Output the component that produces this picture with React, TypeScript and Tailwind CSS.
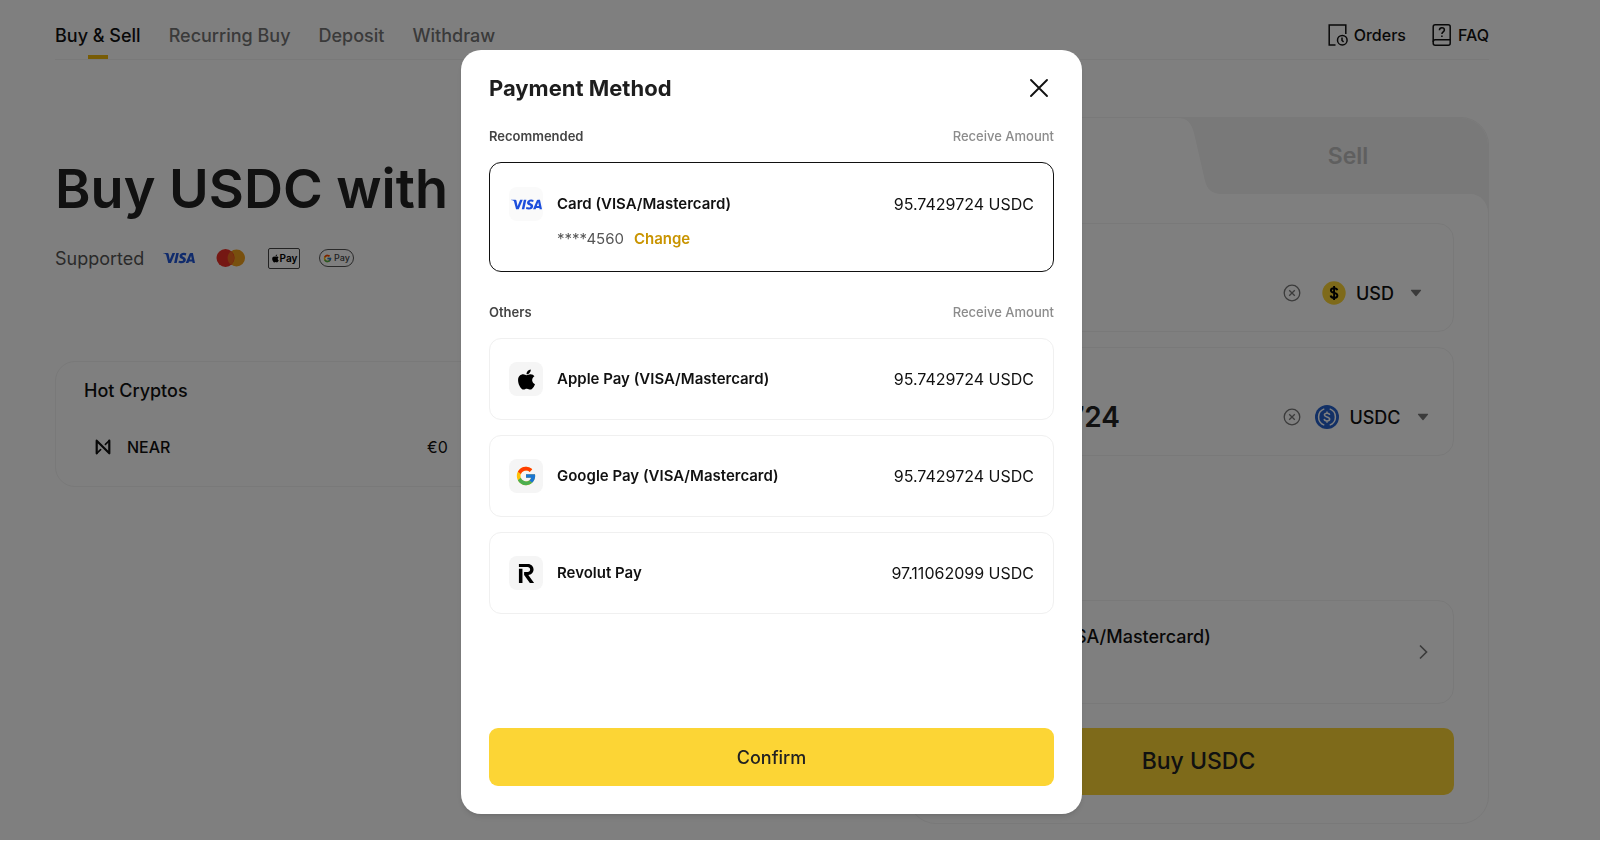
import { useState, type ReactNode } from "react";
import { FaApple } from "react-icons/fa";
import { FcGoogle } from "react-icons/fc";
import { SiRevolut, SiVisa } from "react-icons/si";

function OrdersIcon() {
  return (
    <svg width="20" height="24" viewBox="0 0 20 24" fill="none" stroke="currentColor" strokeWidth="1.5">
      <path d="M7.500 22H1.200V2h16.600v9" />
      <circle cx="14.300" cy="17.200" r="4.800" />
      <path d="M14 14.600v2.900l1.600 1.400" />
    </svg>
  );
}

function FaqIcon() {
  return (
    <svg width="20" height="24" viewBox="0 0 20 24" fill="none" stroke="currentColor" strokeWidth="1.5">
      <rect x="1.200" y="1.800" width="17" height="20.400" rx="2" />
      <path d="M1.200 19c0-1.600.8-2.200 2-2.200h15" />
      <path d="M7.400 7.300c.1-1.700 1.100-2.500 2.500-2.500 1.500 0 2.500.9 2.500 2.200 0 1.900-2.500 1.900-2.500 4" />
      <path d="M9.900 12.500v1.600" />
    </svg>
  );
}

function MastercardIcon() {
  return (
    <svg width="30" height="20" viewBox="0 0 30 20">
      <circle cx="20.500" cy="10" r="8.500" fill="#f0a01c" />
      <circle cx="9.500" cy="10" r="9" fill="#eb2f26" />
      <path d="M15 3.200a9 9 0 0 1 0 13.600a8.500 8.500 0 0 1 0-13.600z" fill="#ee6a1f" />
    </svg>
  );
}

function NearIcon() {
  return (
    <svg width="16" height="16" viewBox="0 0 16 16" fill="none" stroke="currentColor" strokeLinecap="round" strokeLinejoin="round">
      <path d="M1.700 14.300V1.700L14.300 14.300V1.700" strokeWidth="2.200" />
      <path d="M1.700 14.300L5.600 10.600M14.300 1.700L10.400 5.400" strokeWidth="1.600" />
    </svg>
  );
}

function UsdIcon() {
  return (
    <svg width="24" height="24" viewBox="0 0 24 24">
      <circle cx="12" cy="12" r="11.700" fill="#fcd535" />
      <path d="M15.300 9.300c-.3-1.300-1.500-2-3.200-2-1.900 0-3.200.8-3.200 2.200 0 3.200 6.500 1.500 6.500 4.900 0 1.500-1.300 2.400-3.300 2.400s-3.300-.8-3.500-2.300M12.100 5v14" fill="none" stroke="#000" strokeWidth="1.900" />
    </svg>
  );
}

function UsdcIcon() {
  return (
    <svg width="24" height="24" viewBox="0 0 24 24">
      <circle cx="12" cy="12" r="12" fill="#2460cc" />
      <g fill="none" stroke="#fff" strokeWidth="1.500">
        <path d="M9.300 3.900a8.600 8.600 0 0 0 0 16.200M14.700 3.900a8.600 8.600 0 0 1 0 16.200" />
        <path d="M14.600 10c-.2-1.200-1.200-1.800-2.600-1.800-1.600 0-2.600.7-2.600 1.800 0 2.500 5.300 1.300 5.300 4 0 1.200-1.100 1.900-2.700 1.900s-2.700-.7-2.800-2M12 6.400v1.800M12 15.900v1.800" />
      </g>
    </svg>
  );
}

function ClearIcon() {
  return (
    <svg width="18" height="18" viewBox="0 0 18 18" fill="none" stroke="currentColor" strokeWidth="1.300">
      <circle cx="9" cy="9" r="7.800" />
      <path d="M6.200 6.200l5.600 5.600M11.800 6.200l-5.600 5.600" />
    </svg>
  );
}

function CaretIcon() {
  return (
    <svg width="12" height="8" viewBox="0 0 12 8" fill="currentColor">
      <path d="M1.500.8h9a.5.5 0 0 1 .4.900L6.500 7a.7.7 0 0 1-1 0L1.100 1.700a.5.5 0 0 1 .4-.9z" />
    </svg>
  );
}

const tabs = ["Buy & Sell", "Recurring Buy", "Deposit", "Withdraw"];

function Header() {
  return (
    <header className="flex h-[60px] items-stretch justify-between border-b border-[#f2f2f2]">
      <nav className="flex gap-7 pt-3 text-[18px] font-medium text-[#757575]">
        {tabs.map((tab, i) => (
          <a
            key={tab}
            href="#"
            className={
              i === 0
                ? "flex flex-col items-center justify-between pt-2.5 leading-7 text-[#111]"
                : "flex flex-col items-center pt-2.5 leading-7"
            }
          >
            {tab}
            {i === 0 && <span className="h-1 w-5 bg-[#f0b90b]" />}
          </a>
        ))}
      </nav>
      <div className="flex items-center gap-[26px] pt-[11px] text-[16px] font-medium text-[#111]">
        <a href="#" className="flex items-center gap-1.5">
          <OrdersIcon />
          Orders
        </a>
        <a href="#" className="flex items-center gap-1.5">
          <FaqIcon />
          FAQ
        </a>
      </div>
    </header>
  );
}

function Intro() {
  return (
    <section className="flex-1 pt-[97px]">
      <h1 className="text-[54px] leading-[64px] font-semibold text-[#222]">Buy USDC with</h1>
      <div className="mt-[23px] flex h-7 items-center text-[18px] text-[#555]">
        <span className="w-[108px]">Supported</span>
        <SiVisa size={32} color="#2157d8" />
        <span className="ml-[21px]">
          <MastercardIcon />
        </span>
        <span className="ml-[22px] flex h-[21px] w-8 items-center justify-center rounded-xs border border-[#444] text-[10px] font-semibold text-black">
          <FaApple size={9} />
          Pay
        </span>
        <span className="ml-[19px] flex h-[18px] w-[35px] items-center justify-center gap-0.5 rounded-full border border-[#555] text-[9px] font-medium text-[#444]">
          <FcGoogle size={9} />
          Pay
        </span>
      </div>
      <div className="mt-[89px] mr-[100px] rounded-[20px] border border-[#f2f2f2] px-7 pt-[17px] pb-[25px] text-[#111]">
        <h2 className="text-[18px] leading-6 font-medium">Hot Cryptos</h2>
        <div className="mt-[30px] flex items-center pl-[11px] text-[16px] leading-7">
          <NearIcon />
          <span className="ml-4 w-[300px] font-medium">NEAR</span>
          <span>€0</span>
        </div>
      </div>
    </section>
  );
}

function AssetField({ icon, code, amount, label }: { icon: ReactNode; code: string; amount?: string; label: string }) {
  return (
    <div className="flex h-[109px] items-end justify-between rounded-2xl border border-[#f2f2f2] pr-6 pb-[22px]">
      <input
        aria-label={label}
        defaultValue={amount}
        className="h-8 w-[176px] bg-transparent text-right text-[28px] font-semibold text-[#222] outline-none"
      />
      <div className="flex h-8 items-center text-[18px] font-medium text-[#111]">
        <button aria-label="Clear" className="mr-[14px] text-[#777]">
          <ClearIcon />
        </button>
        <button className="flex w-[114px] items-center justify-center gap-2.5">
          {icon}
          {code}
          <span className="ml-1.5 text-[#777]">
            <CaretIcon />
          </span>
        </button>
      </div>
    </div>
  );
}

function TradePanel() {
  return (
    <section className="mt-[57px] w-[581px] rounded-[28px] border border-[#f2f2f2]">
      <div className="relative flex h-[76px]">
        <svg className="absolute inset-0" width="100%" height="96" viewBox="0 0 579 96" preserveAspectRatio="xMaxYMin slice" fill="#f2f2f2">
          <path d="M268 0C278 0 282 4 285 15L296 63C298 71 303 76 312 76H561C571 76 579 84 579 95V28C579 12 567 0 551 0Z" />
        </svg>
        <button aria-label="Buy" className="flex-1" />
        <button className="relative w-[280px] text-[23px] font-semibold text-[#bfbfbf]">Sell</button>
      </div>
      <div className="px-[34px] pt-[29px] pb-7">
        <AssetField label="Spend" icon={<UsdIcon />} code="USD" />
        <div className="h-[15px]" />
        <AssetField label="Receive" icon={<UsdcIcon />} code="USDC" amount="95.7429724" />
        <button className="mt-[144px] flex h-[104px] w-full items-center justify-between rounded-2xl border border-[#f2f2f2] pr-[22px] pl-6 text-[#111]">
          <span className="mb-8 w-[243px] text-right text-[18px] font-medium whitespace-nowrap">Card (VISA/Mastercard)</span>
          <svg width="16" height="18" viewBox="0 0 16 18" fill="none" stroke="#777" strokeWidth="1.700">
            <path d="M5 2.500l6.500 6.500L5 15.500" />
          </svg>
        </button>
        <button className="mt-6 h-[67px] w-full rounded-[10px] bg-[#fcd535] text-[23px] font-medium text-[#222]">Buy USDC</button>
      </div>
    </section>
  );
}

type Method = { id: string; name: string; amount: string; icon: ReactNode; tile: string; card?: string };

const recommended: Method = {
  id: "card",
  name: "Card (VISA/Mastercard)",
  amount: "95.7429724 USDC",
  icon: <SiVisa size={31} color="#1d4fdc" />,
  tile: "bg-[#fafafa]",
  card: "****4560",
};

const others: Method[] = [
  { id: "apple", name: "Apple Pay (VISA/Mastercard)", amount: "95.7429724 USDC", icon: <FaApple size={23} color="#000" />, tile: "bg-[#f5f5f5]" },
  { id: "google", name: "Google Pay (VISA/Mastercard)", amount: "95.7429724 USDC", icon: <FcGoogle size={22} />, tile: "bg-[#f5f5f5]" },
  { id: "revolut", name: "Revolut Pay", amount: "97.11062099 USDC", icon: <SiRevolut size={19} color="#000" />, tile: "bg-[#f5f5f5]" },
];

function MethodOption({ method, checked, onSelect }: { method: Method; checked: boolean; onSelect: () => void }) {
  return (
    <div
      className={
        checked
          ? "relative rounded-xl border border-[#111] px-[19px] pt-6 pb-5"
          : "relative rounded-xl border border-[#f0f0f0] px-[19px] py-[23px]"
      }
    >
      <input type="radio" name="method" id={method.id} checked={checked} onChange={onSelect} className="sr-only" />
      <label htmlFor={method.id} className="flex items-center text-[16px] text-[#111]">
        <span className={`flex size-[34px] items-center justify-center rounded-lg ${method.tile}`}>{method.icon}</span>
        <span className="ml-[14px] flex-1 text-[15px] font-semibold">{method.name}</span>
        <span>{method.amount}</span>
      </label>
      {method.card && (
        <div className="mt-1.5 flex gap-2.5 pl-12 text-[15px] leading-6 text-[#555]">
          <span>{method.card}</span>
          <button className="font-semibold text-[#c99400]">Change</button>
        </div>
      )}
    </div>
  );
}

function ListHeading({ children }: { children: string }) {
  return (
    <div className="flex justify-between text-[13px] leading-5">
      <h3 className="font-semibold text-[#444]">{children}</h3>
      <span className="font-medium text-[#8c8c8c]">Receive Amount</span>
    </div>
  );
}

function PaymentDialog() {
  const [selected, setSelected] = useState("card");
  return (
    <div
      role="dialog"
      aria-labelledby="dialog-title"
      className="flex min-h-[764px] w-[621px] flex-col rounded-[20px] bg-white px-7 pt-[22px] pb-7 shadow-md"
    >
      <div className="flex items-center justify-between">
        <h2 id="dialog-title" className="text-[22px] leading-8 font-bold text-[#1e1e1e]">
          Payment Method
        </h2>
        <button aria-label="Close" className="mr-[5px]">
          <svg width="20" height="20" viewBox="0 0 20 20" fill="none" stroke="#111" strokeWidth="1.900" strokeLinecap="round">
            <path d="M2 2l16 16M18 2L2 18" />
          </svg>
        </button>
      </div>
      <div className="mt-[22px] mb-4">
        <ListHeading>Recommended</ListHeading>
      </div>
      <MethodOption method={recommended} checked={selected === "card"} onSelect={() => setSelected("card")} />
      <div className="mt-[30px] mb-4">
        <ListHeading>Others</ListHeading>
      </div>
      <div className="flex flex-col gap-[15px]">
        {others.map((m) => (
          <MethodOption key={m.id} method={m} checked={selected === m.id} onSelect={() => setSelected(m.id)} />
        ))}
      </div>
      <button className="mt-auto h-[58px] w-full rounded-[9px] bg-[#fcd535] text-[18px] font-medium text-[#222]">Confirm</button>
    </div>
  );
}

export default function App() {
  return (
    <div className="min-h-screen bg-white font-['Inter',sans-serif]">
      <div className="pr-[111px] pl-[55px]">
        <Header />
        <main className="flex justify-between">
          <Intro />
          <TradePanel />
        </main>
      </div>
      <div className="fixed inset-x-0 top-0 bottom-px flex items-start justify-center overflow-hidden bg-black/50 pt-[50px] pr-[57px]">
        <PaymentDialog />
      </div>
    </div>
  );
}
